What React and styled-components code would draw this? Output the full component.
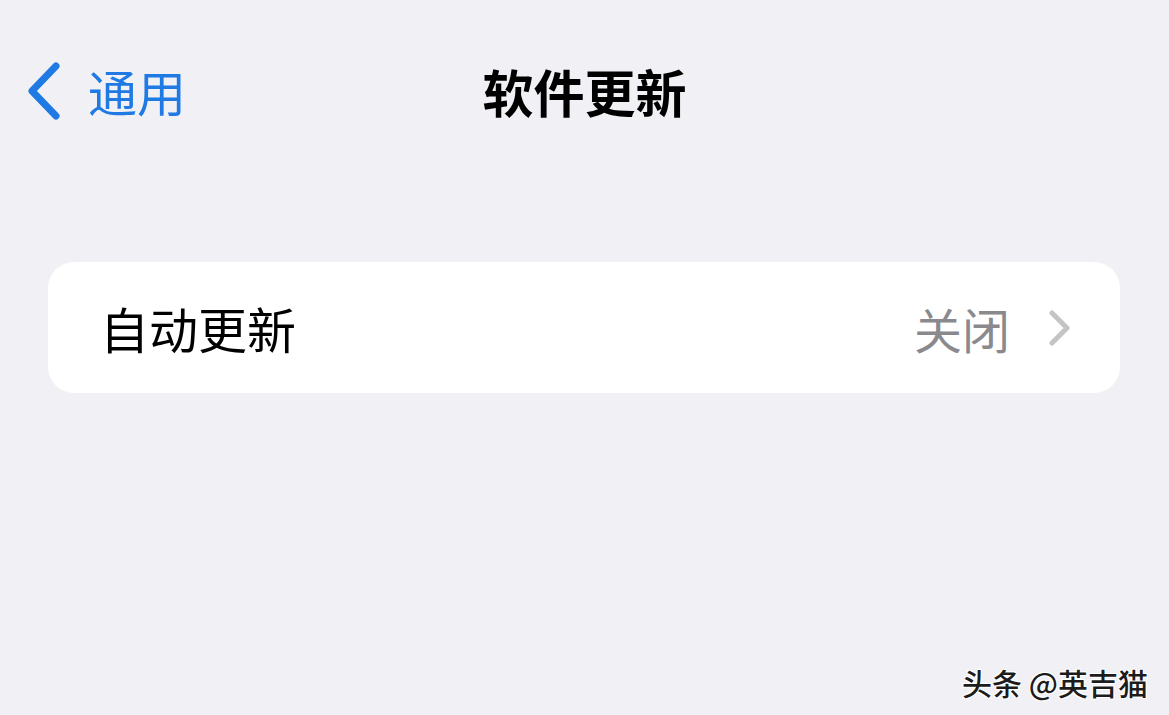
import React from "react";
import styled, { createGlobalStyle } from "styled-components";

const Global = createGlobalStyle`
  html, body { margin: 0; padding: 0; background: #f0f0f5; }
  body { font-family: "Noto Sans CJK SC", "Noto Sans", sans-serif; }
  * { box-sizing: border-box; }
`;

const Page = styled.div`
  position: relative;
  width: 1169px;
  height: 715px;
  background: #f0f0f5;
  overflow: hidden;
  display: flex;
  flex-direction: column;
`;

const NavBar = styled.div`
  display: grid;
  grid-template-columns: 1fr auto 1fr;
  align-items: center;
  height: 60px;
  margin-top: 61px;
  padding: 0 27px;
`;

const BackButton = styled.div`
  display: flex;
  align-items: center;
  gap: 27px;
  color: #1f7ae4;
  font-size: 49px;
  line-height: 1;
`;

const BackLabel = styled.span`
  margin-top: -2px;
`;

const Title = styled.div`
  font-size: 51px;
  font-weight: 700;
  color: #000;
  line-height: 1;
`;

const Group = styled.div`
  margin: 141px 49px 0 48px;
  background: #fff;
  border-radius: 26px;
  overflow: hidden;
`;

const Row = styled.div`
  display: flex;
  align-items: center;
  height: 131px;
  padding: 0 48px 0 52px;
`;

const RowLabel = styled.div`
  flex: 1;
  font-size: 49px;
  color: #000;
  line-height: 1;
`;

const RowValue = styled.div`
  font-size: 48px;
  color: #8a8a8e;
  line-height: 1;
  margin-right: 38px;
`;

const Watermark = styled.div`
  position: absolute;
  right: 21px;
  bottom: 18px;
  font-family: "Noto Sans CJK SC", sans-serif;
  font-size: 30px;
  font-weight: 500;
  color: #1c1c1c;
  line-height: 1;
  text-shadow: 1px 1px 0 #fff, -1px -1px 0 #fff, 1px -1px 0 #fff, -1px 1px 0 #fff;
`;

const BackChevron = () => (
  <svg width="34" height="58" viewBox="0 0 34 58">
    <path d="M29 4 L5 29 L29 54" fill="none" stroke="#1f7ae4" strokeWidth="7" strokeLinecap="round" strokeLinejoin="round" />
  </svg>
);

const Disclosure = () => (
  <svg width="24" height="36" viewBox="0 0 24 36">
    <path d="M4 3 L19 18 L4 33" fill="none" stroke="#c4c4c7" strokeWidth="5" strokeLinecap="round" strokeLinejoin="round" />
  </svg>
);

export default function App() {
  return (
    <>
      <Global />
      <Page>
        <NavBar>
          <BackButton>
            <BackChevron />
            <BackLabel>通用</BackLabel>
          </BackButton>
          <Title>软件更新</Title>
          <div />
        </NavBar>
        <Group>
          <Row>
            <RowLabel>自动更新</RowLabel>
            <RowValue>关闭</RowValue>
            <Disclosure />
          </Row>
        </Group>
        <Watermark>头条 @英吉猫</Watermark>
      </Page>
    </>
  );
}
